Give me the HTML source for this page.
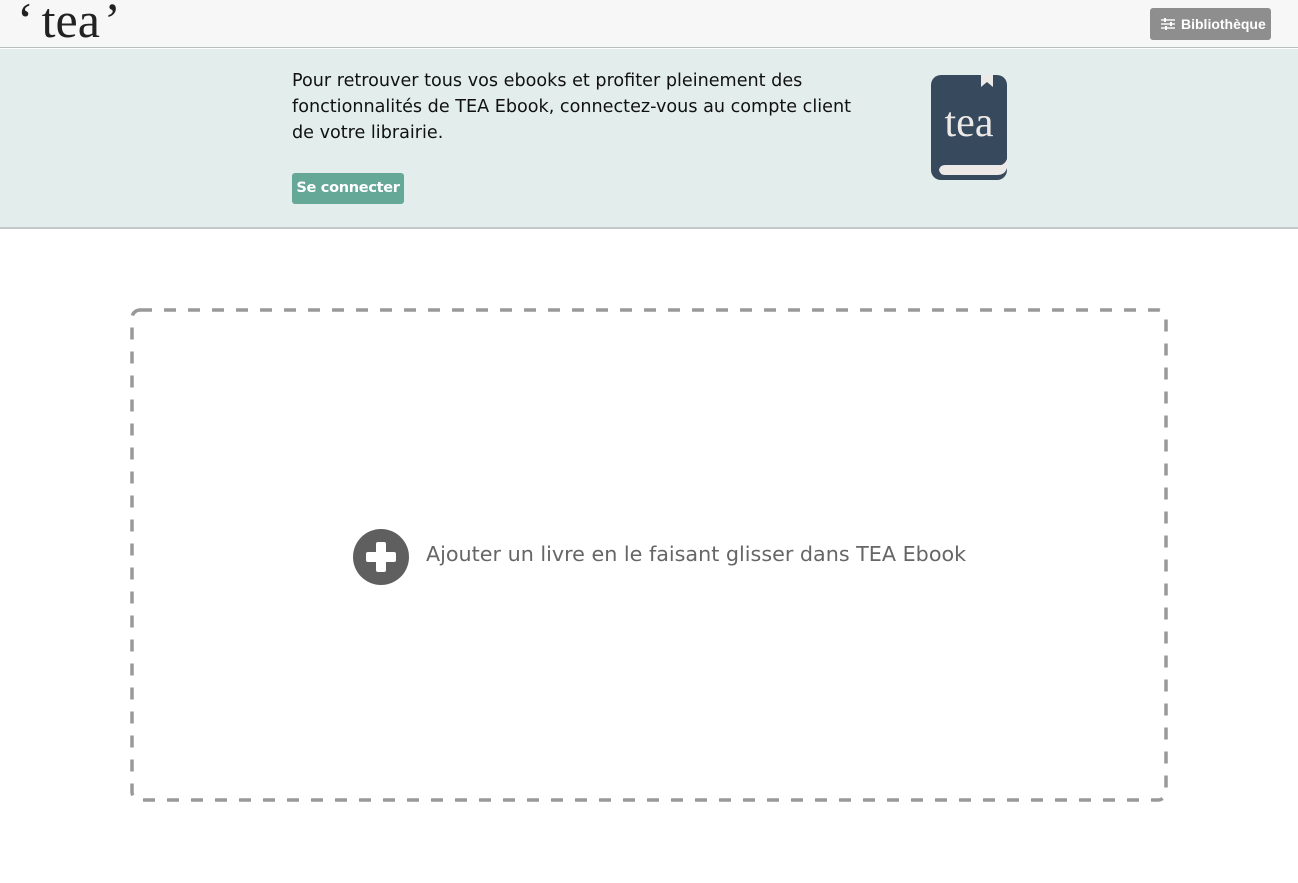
<!DOCTYPE html>
<html><head><meta charset="utf-8"><style>
*{margin:0;padding:0;box-sizing:border-box}
body{width:1298px;height:883px;background:#fff;font-family:"Liberation Sans",sans-serif;position:relative;overflow:hidden}
.hdr{position:absolute;left:0;top:0;width:1298px;height:48px;background:#f7f7f7;border-bottom:1px solid #b9bfbf}
.logo{position:absolute;left:17px;top:-9px;font-family:"Liberation Serif",serif;font-size:50px;color:#222;white-space:nowrap}
.bib{position:absolute;left:1150px;top:8px;width:121px;height:32px;background:#8e8e8e;border-radius:3px;color:#fff;font-size:14px;font-weight:bold;line-height:32px;padding-left:31px}
.bib svg{position:absolute;left:11px;top:10px}
.ban{position:absolute;left:0;top:49px;width:1298px;height:180px;background:#e3edec;border-bottom:2px solid #c4c8c8}
.txt{position:absolute;left:292px;top:19px;font-family:"DejaVu Sans",sans-serif;font-size:17.6px;line-height:26px;color:#111;white-space:nowrap}
.btn{position:absolute;left:292px;top:124px;width:112px;height:31px;background:#65a898;border-radius:3px;color:#fff;font-family:"DejaVu Sans",sans-serif;font-size:14.5px;font-weight:bold;text-align:center;line-height:31px;letter-spacing:-0.3px}
.book{position:absolute;left:931px;top:26px}
.add{position:absolute;left:426px;top:542px;font-family:"DejaVu Sans",sans-serif;font-size:20.7px;color:#666;white-space:nowrap}
</style></head><body>
<div class="hdr"><div class="logo">‘<span style="margin-left:8px">tea</span><span style="margin-left:4px">’</span></div>
<div class="bib"><svg width="14" height="12" viewBox="0 0 14 12"><g stroke="#fff" stroke-width="1.4"><line x1="0" y1="2" x2="14" y2="2"/><line x1="0" y1="6" x2="14" y2="6"/><line x1="0" y1="10" x2="14" y2="10"/></g><g fill="#fff"><rect x="3" y="0" width="2" height="4"/><rect x="9" y="4" width="2" height="4"/><rect x="4" y="8" width="2" height="4"/></g></svg>Bibliothèque</div></div>
<div class="ban">
<div class="txt">Pour retrouver tous vos ebooks et profiter pleinement des<br>fonctionnalités de TEA Ebook, connectez-vous au compte client<br>de votre librairie.</div>
<div class="btn">Se connecter</div>
<svg class="book" width="77" height="106" viewBox="0 0 77 106">
<rect x="0" y="0" width="76" height="105" rx="10" fill="#36495d"/>
<path d="M50 0 H62 V12 L56 7 L50 12Z" fill="#ece9e6"/>
<path d="M8 95 Q9 90 14 90 H70 Q74 89 76 84 V93 Q74 100 66 100 H14 Q9 100 8 95Z" fill="#ece9e6"/>
<text x="38" y="61" text-anchor="middle" font-family="Liberation Serif,serif" font-size="42" fill="#ece9e6">tea</text>
</svg>
</div>
<svg style="position:absolute;left:0;top:0" width="1298" height="883">
<rect x="132" y="310" width="1034" height="490" rx="8" fill="none" stroke="#999" stroke-width="3.5" stroke-dasharray="12 12"/>
<circle cx="381" cy="557" r="28" fill="#5f5f5f"/>
<rect x="366" y="552" width="30" height="10" rx="2" fill="#fff"/>
<rect x="376" y="542" width="10" height="30" rx="2" fill="#fff"/>
</svg>
<div class="add">Ajouter un livre en le faisant glisser dans TEA Ebook</div>
</body></html>
